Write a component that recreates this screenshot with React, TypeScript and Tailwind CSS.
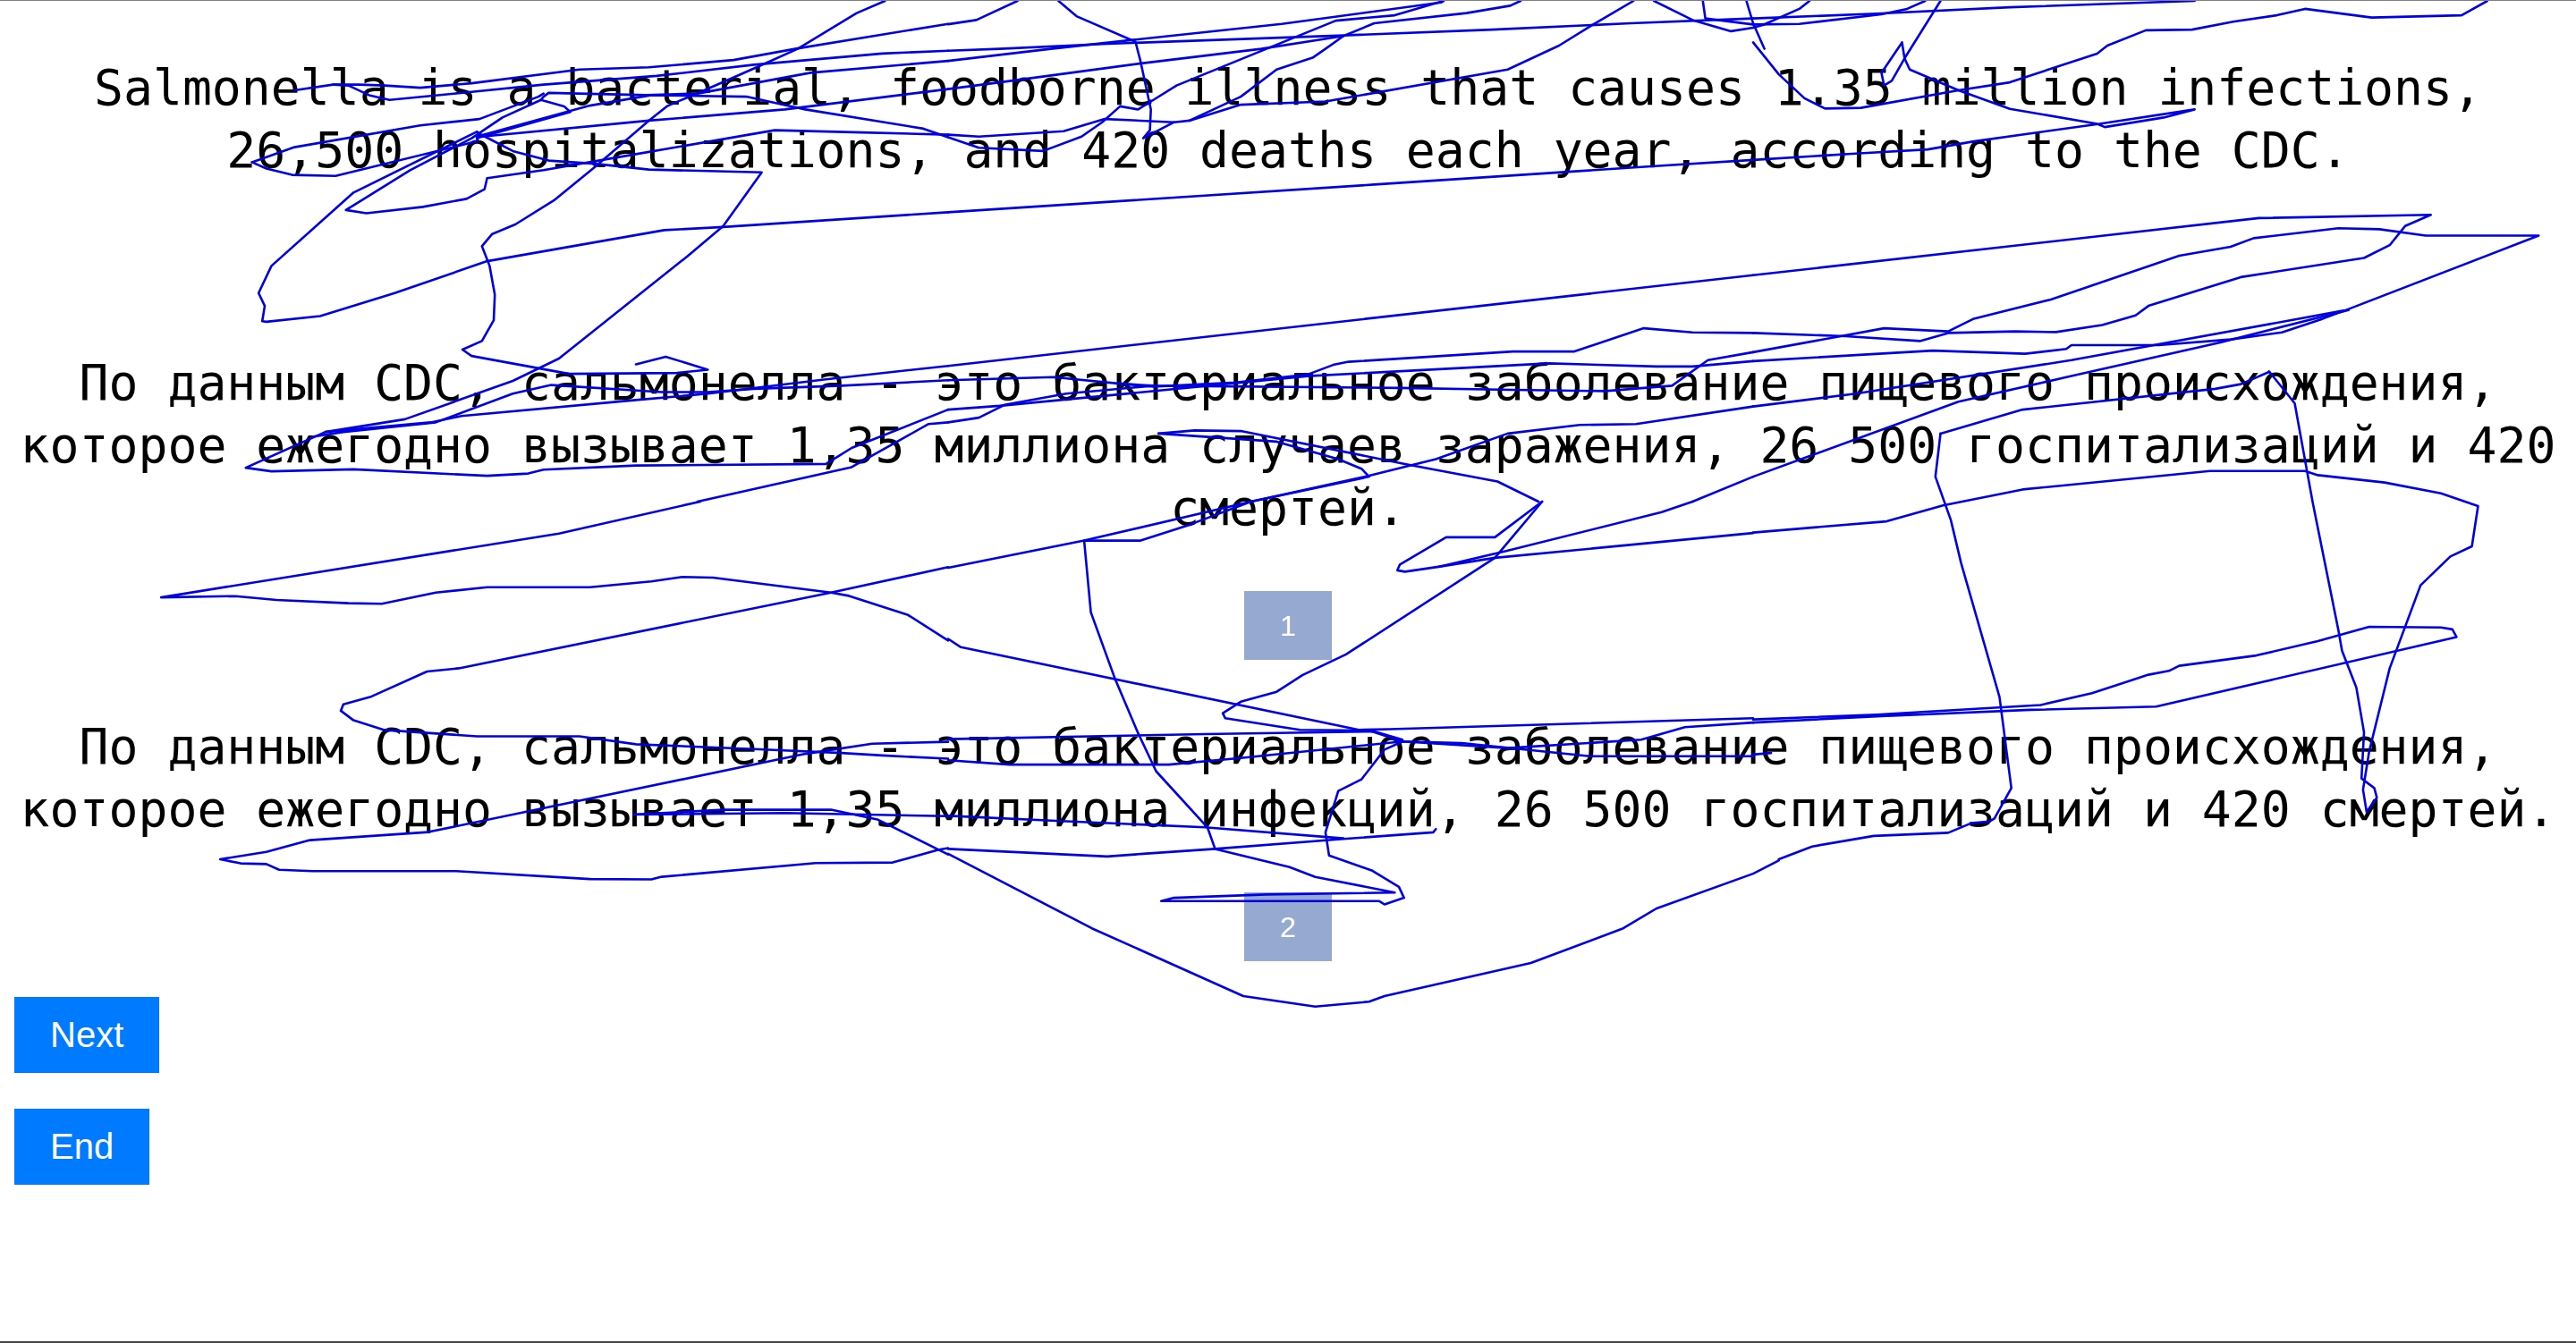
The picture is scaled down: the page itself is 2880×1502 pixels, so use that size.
import React from "react";

type Stroke = number[];
type Tile = { x: number; y: number; sy: number; strokes: Stroke[] };

const SX = 900 / 1568;
const SY = 560 / 1568;

const tiles: Tile[] = [
  { x: 160, y: 0, sy: SY, strokes: [
    [1445,0,1390,38,1275,150,1195,208,1100,275,1020,330,985,375,880,520,800,625,725,700,680,730,660,768,675,830,685,920,683,1000,660,1065,622,1092,640,1112,830,1168,1040,1165,1100,1155,1018,1114,960,1138],
    [1568,72,1270,150,1150,185,985,208,850,215,640,258,540,272,470,265,420,262,370,262,295,280],
    [1568,156,1440,165,1190,200,1000,235,780,262,640,285,480,310,440,295,400,265,370,262],
    [1568,188,1300,225,1080,290,980,295,790,288,780,300,775,310,700,365,640,430,520,530,410,640,395,655,435,665,545,645,630,620,665,590,670,555,780,530,960,480,1230,405,1400,412,1568,419],
    [775,310,820,330,832,348,650,430],
    [650,425,870,328,990,295,1175,300,1290,340,1520,400,1568,427],
    [660,425,985,375,1250,340,1568,276],
    [650,410,410,600,250,830,225,915,237,955,232,1003,240,1005,345,987,490,915,670,815,1015,718,1130,708,1568,662],
    [650,410,660,420,720,470,790,500,880,510,985,528,1205,537,1130,705,1060,800,810,1120,720,1190,510,1310,355,1350,200,1462,250,1473,410,1467,670,1487,750,1480,780,1468,960,1455,1330,1450,1380,1400,1568,1280],
    [212,505,295,458,540,390,655,370,770,300,780,290],
    [212,505,240,525,290,545,375,548,650,440,655,415],
    [1568,1188,1360,1205,1190,1215,1100,1225,1010,1225,795,1203,720,1230,570,1320,390,1350,330,1365],
    [1568,1143,1330,1185,1100,1230,960,1250,620,1300,560,1320,355,1350],
    [1080,1568,1380,1460,1530,1325,1568,1320],
  ]},
  { x: 1060, y: 0, sy: SY, strokes: [
    [0,73,55,60,135,0],
    [215,0,250,48,365,128,375,190,395,340,393,405,380,430,440,380],
    [0,156,100,150,300,135,770,108,1060,90,1330,70,1568,55],
    [0,188,200,150,360,122,650,72,960,5,965,0],
    [0,276,100,255,380,195,610,150,770,110,830,70,1010,38,1095,15,1115,0],
    [0,427,60,460,185,470,260,425,300,380,335,330,370,340,395,315,445,265,620,150,755,62,870,45,965,0],
    [470,375,570,300,640,215,710,178,735,150,770,110],
    [1335,0,1250,80,1190,140,1090,215,735,315,570,325,470,375,440,380,305,370,225,408,60,425,0,419],
    [1375,0,1450,60,1525,95,1568,84],
    [1470,0,1475,55,1568,74],
    [1555,0,1568,70,1590,150],
    [0,662,830,575,1370,518,1568,498],
    [0,1143,1568,859],
    [0,1188,205,1178,330,1198,400,1208,560,1195,700,1170,750,1140,780,1130,1100,1098,1220,1098,1355,1025,1450,1038,1568,1040],
    [1568,1100,1480,1125,1410,1205,1280,1222,1100,1218,880,1212,400,1205,330,1198],
    [0,1280,100,1268,380,1225,700,1175,1170,1135,1380,1145,1450,1145,1568,1128],
    [0,1320,60,1305,110,1265,230,1230,400,1205],
    [410,1355,640,1380,760,1435,805,1465,820,1490,590,1568],
    [410,1355,480,1345,570,1347,890,1450,1070,1505,1150,1568],
    [590,1568,820,1487,950,1435,1090,1355,1230,1328,1340,1325,1568,1270],
    [1450,1568,1568,1490],
  ]},
  { x: 1960, y: 0, sy: SY, strokes: [
    [110,0,90,25,20,75,0,84],
    [0,74,90,72,250,42,300,25,335,0],
    [0,55,240,40,500,20,860,0],
    [365,0,295,180,305,215,400,280,500,338,670,385,685,395,800,365,860,340,675,385,430,440,340,465,200,478,0,498],
    [0,130,50,230,100,305,140,337,210,335,400,280,500,255,670,165,690,140,765,92,855,90,935,65,1020,45,1075,25,1205,52,1380,45,1430,0],
    [290,130,250,225,255,265,270,250,295,180,290,130],
    [0,859,985,680,1320,670,1270,705,1240,765,1190,805,950,865,770,955,745,985,680,1015,590,1037,510,1035,380,1040,325,1065,180,1050,0,1040],
    [0,1100,255,1025,380,1035,430,995,580,935,830,798,930,770,975,743,1140,712,1220,715,1310,735,1530,735,1160,965,1110,995,1030,1038,930,1060,790,1078,620,1078,610,1090,530,1105,350,1095,0,1128],
    [0,1270,200,1230,620,1125,1150,970],
    [0,1490,400,1255,620,1175,910,1070,1160,968],
    [365,1355,525,1280,900,1215,950,1200,1005,1162],
  ]},
  { x: 160, y: 560, sy: SY, strokes: [
    [1085,0,810,100,35,300,180,296,260,308,400,318,465,320,570,285,670,268,870,268,990,250,1050,236,1110,238,1340,285,1375,295,1490,355,1568,435],
    [1568,205,1340,285,615,522,553,532,445,610,390,635,385,655,410,685,470,715,650,735,850,735,960,760,1190,775,1360,787,1440,795,1568,805],
    [1568,752,1420,758,1290,790,555,1035,325,1060,240,1097,150,1120,190,1133,240,1135,265,1153,330,1157,610,1157,870,1182,990,1183,1010,1175,1310,1132,1460,1130,1550,1090,1568,1085],
    [955,980,1130,965,1340,965,1430,995,1568,1105],
    [955,980,1250,975,1568,985],
  ]},
  { x: 1060, y: 560, sy: 580 / 1568, strokes: [
    [0,200,265,118,590,0],
    [590,0,470,70,375,118,265,118,278,335,325,535,370,700,405,815,505,985,520,1050,665,1105,715,1135,870,1182,620,1188,440,1198,415,1208,840,1208,850,1218,888,1198,878,1165,825,1115,742,1070,735,1000,760,875,805,840,850,750,885,725,820,692,685,690,540,655,535,640,570,605,640,575,690,525,775,462,1065,170,1157,0],
    [1157,0,1065,108,970,108,880,190,875,208,890,212,955,197,1065,170,1568,95],
    [955,197,1085,150,1390,32,1450,0],
    [0,1050,310,1073,380,1065,520,1050,770,1020,945,1000,950,990],
    [0,1065,280,1290,575,1495,715,1527,820,1512,850,1495,1135,1395,1315,1290,1380,1230,1568,1125,1618,1085],
    [0,415,25,440,800,690,860,688,1568,655],
    [0,782,120,795,430,795,570,775,885,725,1000,730,1250,770,1410,770,1568,770],
    [0,718,500,703,830,695,885,720],
    [885,725,1090,745,1350,720,1435,682,1568,668],
    [0,950,210,965,500,985,770,1018],
  ]},
  { x: 1960, y: 400, sy: SY, strokes: [
    [1005,40,1055,140,1090,450,1140,850,1147,915,1175,1030,1190,1170,1185,1315,1210,1345,1215,1375,1195,1420,1188,1350,1200,1230,1240,970,1300,710,1358,620,1400,588,1412,462,1340,422,1230,388,1100,365,1075,352,890,352,525,410,370,460,260,510,0,545],
    [365,235,355,370,385,505,405,640,480,1060,503,1345,470,1440,460,1450,425,1455,380,1485,235,1495,115,1528,50,1568],
    [0,1130,240,1115,560,1085,660,1048,770,990,810,978,830,962,980,930,1100,885,1200,840,1340,842,1362,848,1370,872,785,1090,540,1100,250,1120,0,1140],
    [0,1240,35,1235],
  ]},
];

const toPoints = (t: Tile, s: Stroke) => {
  const out: string[] = [];
  for (let i = 0; i < s.length; i += 2) {
    out.push(`${(t.x + s[i] * SX).toFixed(1)},${(t.y + s[i + 1] * t.sy).toFixed(1)}`);
  }
  return out.join(" ");
};

function Para({ children }: { children: React.ReactNode }) {
  return (
    <p className="text-center text-black text-[54.75px] leading-[70px] font-['DejaVu_Sans_Mono',monospace]">
      {children}
    </p>
  );
}

function Box({ n }: { n: number }) {
  return (
    <div className="mx-auto flex h-[77px] w-[98px] items-center justify-center bg-[#95a9d1] text-[32px] text-white">
      {n}
    </div>
  );
}

function Btn({ children }: { children: React.ReactNode }) {
  return (
    <button className="block w-fit bg-[#007bff] px-10 py-5 text-[40px] leading-[45px] text-white">
      {children}
    </button>
  );
}

export default function App() {
  return (
    <div className="relative h-[1502px] w-[2880px] overflow-hidden border-t border-b-2 border-t-[#808080] border-b-[#444444] bg-white font-['Liberation_Sans',sans-serif]">
      <div className="flex flex-col pt-[62px]">
        <Para>
          Salmonella is a bacterial, foodborne illness that causes 1.35 million infections, 26,500 hospitalizations, and 420 deaths each year, according to the CDC.
        </Para>
        <div className="mt-[190px]">
          <Para>
            По данным CDC, сальмонелла - это бактериальное заболевание пищевого происхождения, которое ежегодно вызывает 1,35 миллиона случаев заражения, 26 500 госпитализаций и 420 смертей.
          </Para>
        </div>
        <div className="mt-[58px]"><Box n={1} /></div>
        <div className="mt-[62px]">
          <Para>
            По данным CDC, сальмонелла - это бактериальное заболевание пищевого происхождения, которое ежегодно вызывает 1,35 миллиона инфекций, 26 500 госпитализаций и 420 смертей.
          </Para>
        </div>
        <div className="mt-[58px]"><Box n={2} /></div>
        <div className="mt-10 flex flex-col gap-10 pl-4">
          <Btn>Next</Btn>
          <Btn>End</Btn>
        </div>
      </div>
      <svg className="pointer-events-none absolute left-0 top-0 h-[1502px] w-[2880px]" viewBox="0 0 2880 1502" fill="none">
        {tiles.map((t, i) =>
          t.strokes.map((s, j) => (
            <polyline key={`${i}-${j}`} points={toPoints(t, s)} stroke="#0000e6" strokeWidth={2.6} strokeLinejoin="round" strokeLinecap="round" />
          ))
        )}
      </svg>
    </div>
  );
}
